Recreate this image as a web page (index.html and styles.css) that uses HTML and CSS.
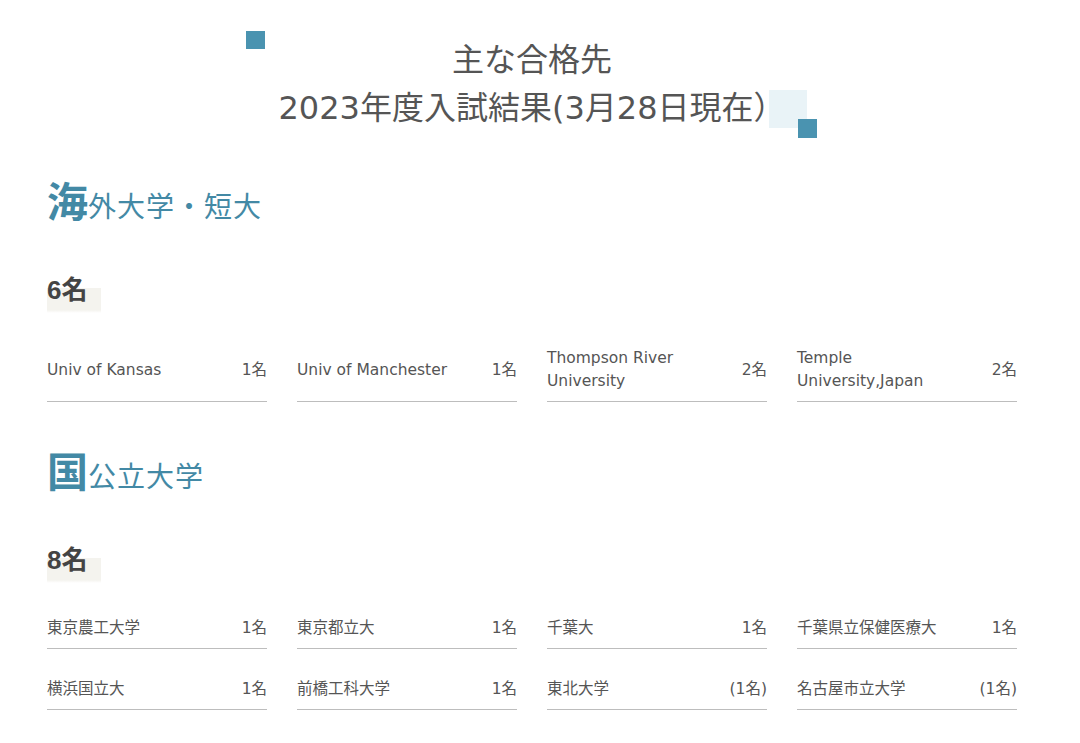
FILE: index.html
```html
<!DOCTYPE html>
<html lang="ja">
<head>
<meta charset="utf-8">
<title>主な合格先</title>
<link rel="stylesheet" href="styles.css">
</head>
<body>
<main class="page">
  <header class="title-wrap">
    <h1 class="title"><span class="deco-dot"></span>主な合格先<br>2023年度入試結果(3月28日現在）</h1>
  </header>

  <section class="block">
    <h2 class="cat"><span class="cat-first">海</span>外大学・短大</h2>
    <p class="count"><span class="count-label">6名</span></p>
    <ul class="grid">
      <li class="item"><span class="name">Univ of Kansas</span><span class="num">1名</span></li>
      <li class="item"><span class="name">Univ of Manchester</span><span class="num">1名</span></li>
      <li class="item"><span class="name">Thompson River University</span><span class="num">2名</span></li>
      <li class="item"><span class="name">Temple University,Japan</span><span class="num">2名</span></li>
    </ul>
  </section>

  <section class="block">
    <h2 class="cat"><span class="cat-first">国</span>公立大学</h2>
    <p class="count"><span class="count-label">8名</span></p>
    <ul class="grid">
      <li class="item"><span class="name">東京農工大学</span><span class="num">1名</span></li>
      <li class="item"><span class="name">東京都立大</span><span class="num">1名</span></li>
      <li class="item"><span class="name">千葉大</span><span class="num">1名</span></li>
      <li class="item"><span class="name">千葉県立保健医療大</span><span class="num">1名</span></li>
      <li class="item"><span class="name">横浜国立大</span><span class="num">1名</span></li>
      <li class="item"><span class="name">前橋工科大学</span><span class="num">1名</span></li>
      <li class="item"><span class="name">東北大学</span><span class="num">(1名)</span></li>
      <li class="item"><span class="name">名古屋市立大学</span><span class="num">(1名)</span></li>
    </ul>
  </section>
</main>
</body>
</html>
```

FILE: styles.css
```css
html {
  background: #ffffff;
}

html, body {
  margin: 0;
  padding: 0;
}

body {
  font-family: "Liberation Sans", "Noto Sans CJK JP", sans-serif;
  color: #555555;
}

.page {
  width: 970px;
  padding: 0 63px 0 47px;
}

/* ---------- title ---------- */
.title-wrap {
  text-align: center;
  padding-top: 36px;
  isolation: isolate;
}

.title {
  display: inline-block;
  position: relative;
  margin: 0;
  font-family: "DejaVu Sans", "Noto Sans CJK JP", sans-serif;
  font-size: 32px;
  font-weight: 400;
  line-height: 48px;
  color: #555555;
}

.title::before {
  content: "";
  position: absolute;
  left: -32px;
  top: -5px;
  width: 19px;
  height: 18px;
  background: #4a93b0;
}

.deco-dot {
  position: absolute;
  right: -21px;
  top: 54px;
  width: 38px;
  height: 38px;
  background: #e9f3f7;
  z-index: -1;
}

.title::after {
  content: "";
  position: absolute;
  right: -31px;
  top: 83px;
  width: 19px;
  height: 19px;
  background: #4a93b0;
}

/* ---------- sections ---------- */
.block {
  display: flex;
  flex-direction: column;
  align-items: flex-start;
}

.cat {
  margin: 51px 0 0;
  font-size: 28px;
  font-weight: 400;
  line-height: 50px;
  height: 50px;
  color: #4389a5;
  letter-spacing: 1px;
}

.cat-first {
  font-size: 41px;
  font-weight: 700;
  line-height: 40px;
  letter-spacing: 0;
}

.count {
  margin: 42px 0 0;
  line-height: 30px;
}

.count-label {
  display: inline-block;
  font-size: 26px;
  font-weight: 700;
  color: #444444;
  line-height: 30px;
  padding: 0 14px 8px 0;
  background: linear-gradient(to bottom, transparent 34%, #f4f3ee 34%, #f4f3ee 92%, transparent 100%);
}

.grid {
  list-style: none;
  margin: 34px 0 0;
  padding: 0;
  width: 970px;
  display: grid;
  grid-template-columns: repeat(4, 1fr);
  column-gap: 30px;
  row-gap: 29px;
}

.item {
  display: flex;
  justify-content: space-between;
  align-items: center;
  font-family: "DejaVu Sans", "Noto Sans CJK JP", sans-serif;
  font-size: 15.5px;
  line-height: 23px;
  padding-bottom: 8px;
  border-bottom: 1px solid #bdbdbd;
  color: #555555;
}

.name {
  max-width: 160px;
}

.num {
  flex: none;
  white-space: nowrap;
}
```
